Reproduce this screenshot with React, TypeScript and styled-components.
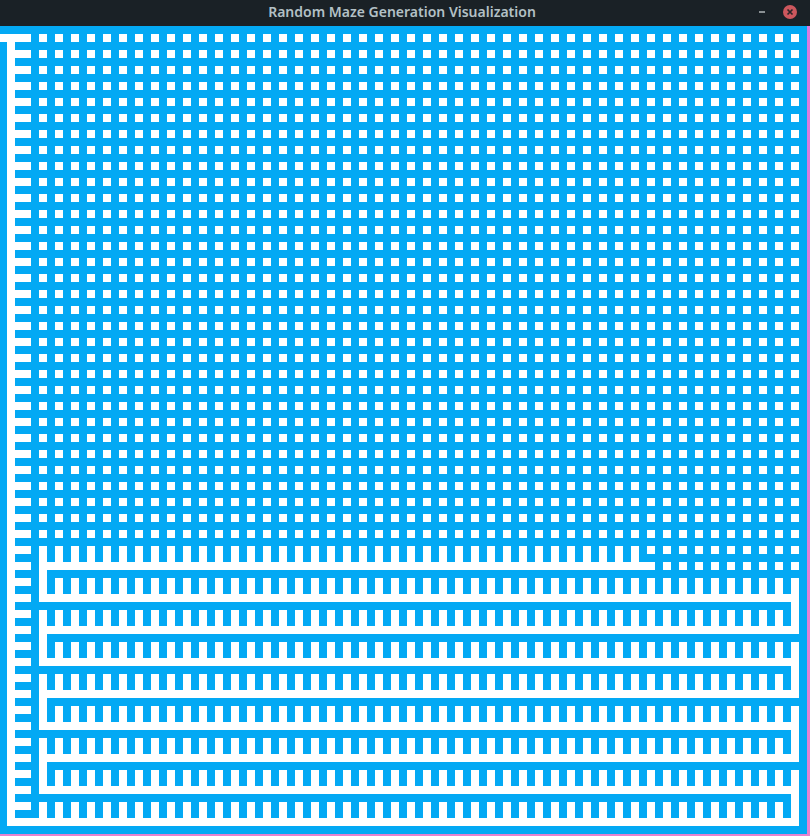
import React from 'react'
import styled, { createGlobalStyle } from 'styled-components'

const CELL = 8
const PITCH = 16
const SIZE = 50
const BOARD_H = 808

const GlobalStyle = createGlobalStyle`
    html, body {
        margin: 0;
        padding: 0;
        background: #e07fdc;
    }
`
const Window = styled.div`
    width: 810px;
    height: 836px;
    display: flex;
    flex-direction: column;
    overflow: hidden;
    position: relative;
    background: linear-gradient(180deg, #d97adf 0%, #e583cf 100%);
`
const TitleBar = styled.div`
    height: 26px;
    flex: none;
    display: flex;
    align-items: center;
    justify-content: center;
    padding-right: 6px;
    box-sizing: border-box;
    background: #1a2126;
    position: relative;
`
const Title = styled.h1`
    margin: 0;
    font-family: "Noto Sans", "Open Sans", sans-serif;
    font-size: 14px;
    font-weight: 600;
    line-height: 24px;
    color: #b3c0c5;
    transform: translateY(-1px);
`
const Controls = styled.div`
    position: absolute;
    right: 13px;
    top: 5px;
    display: flex;
    align-items: center;
    gap: 18px;
`
const MinimizeButton = styled.span`
    display: block;
    width: 6px;
    height: 2px;
    background: #8a9093;
`
const CloseButton = styled.svg`
    display: block;
    width: 14px;
    height: 14px;
`
const Board = styled.svg`
    display: block;
    flex: none;
    width: 807px;
    height: ${BOARD_H}px;
    background: #03a9f4;
`

type Segment = { x: number; y: number; w: number; h: number }

// cell from (c1,r1) to (c2,r2), walls between are opened
function corridor(c1: number, r1: number, c2: number, r2: number): Segment {
    return {
        x: 7 + c1 * PITCH,
        y: 8 + r1 * PITCH,
        w: (c2 - c1) * PITCH + CELL,
        h: (r2 - r1) * PITCH + CELL,
    }
}

function buildMaze(): Segment[] {
    const out: Segment[] = []

    // entrance and the long left column
    out.push({ x: 0, y: 8, w: 8, h: CELL })
    out.push(corridor(0, 0, 0, SIZE - 1))
    for (let r = 0; r < SIZE; r++) out.push(corridor(0, r, 1, r))

    // cells not visited yet
    for (let r = 0; r < 32; r++) {
        for (let c = 2; c < SIZE; c++) out.push(corridor(c, r, c, r))
    }
    for (let c = 40; c < SIZE; c++) out.push(corridor(c, 32, c, 32))
    for (let c = 41; c < SIZE; c++) out.push(corridor(c, 33, c, 33))

    // first unfinished comb
    out.push(corridor(2, 33, 40, 33))
    for (let c = 2; c < 40; c++) out.push(corridor(c, 32, c, 33))

    // combs below, each tooth row hangs on the row under it
    for (let r = 35; r < SIZE; r += 2) {
        out.push(corridor(2, r, SIZE - 1, r))
        for (let c = 2; c < SIZE; c++) out.push(corridor(c, r - 1, c, r))
    }

    // the turns that join the combs into one path
    for (let r = 33; r < SIZE - 2; r += 4) out.push(corridor(2, r, 2, r + 2))
    for (let r = 35; r < SIZE - 2; r += 4) out.push(corridor(SIZE - 1, r, SIZE - 1, r + 2))
    out.push(corridor(0, SIZE - 1, 2, SIZE - 1))

    return out
}

const segments = buildMaze()

export default function App() {
    return (
        <Window>
            <GlobalStyle />
            <TitleBar>
                <Title>Random Maze Generation Visualization</Title>
                <Controls>
                    <MinimizeButton />
                    <CloseButton viewBox="0 0 14 14">
                        <circle cx="7" cy="7" r="7" fill="#cc575d" />
                        <path d="M4.5 4.5 L9.5 9.5 M9.5 4.5 L4.5 9.5" stroke="#2a2529" strokeWidth="1.7" />
                    </CloseButton>
                </Controls>
            </TitleBar>
            <Board viewBox={`0 0 807 ${BOARD_H}`} shapeRendering="crispEdges">
                {segments.map((s, i) => (
                    <rect key={i} x={s.x} y={s.y} width={s.w} height={s.h} fill="#fff" />
                ))}
            </Board>
        </Window>
    )
}
